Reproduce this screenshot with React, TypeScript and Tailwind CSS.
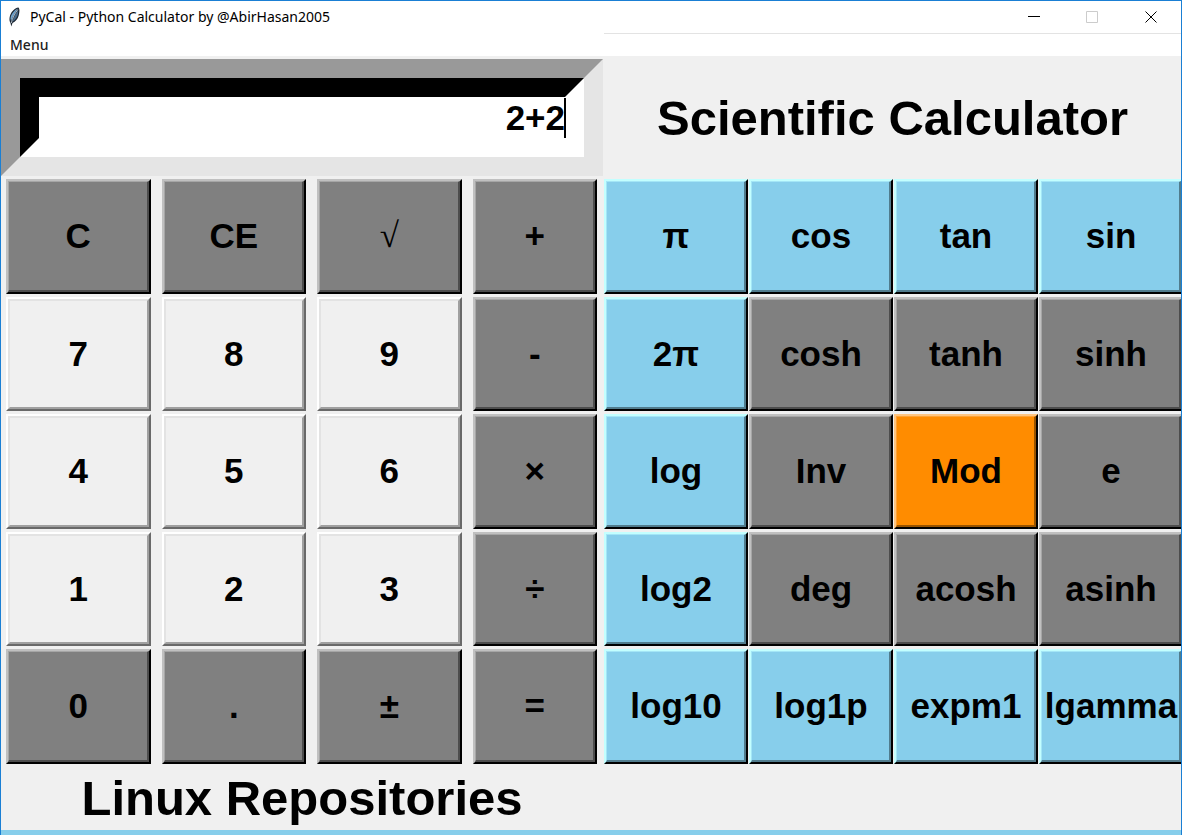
import { useState } from "react";

type Tone = "gray" | "light" | "sky" | "orange";
type Key = { label: string; tone: Tone };

const OUTER: Record<Tone, string> = {
  gray: "border-t-[#c0c0c0] border-l-[#c0c0c0] border-r-black border-b-black bg-[#808080]",
  light: "border-t-white border-l-white border-r-[#696969] border-b-[#696969] bg-[#f0f0f0]",
  sky: "border-t-[#c3ffff] border-l-[#c3ffff] border-r-black border-b-black bg-[#87ceeb]",
  orange: "border-t-[#ffc580] border-l-[#ffc580] border-r-black border-b-black bg-[#ff8c00]",
};

const INNER: Record<Tone, string> = {
  gray: "border-t border-l pt-px pl-px border-t-[#a6a6a6] border-l-[#a6a6a6] border-r-[#4d4d4d] border-b-[#4d4d4d]",
  light: "border-t-2 border-l-2 border-t-[#e3e3e3] border-l-[#e3e3e3] border-r-[#a0a0a0] border-b-[#a0a0a0]",
  sky: "border-t border-l pt-px pl-px border-t-[#a4e6f6] border-l-[#a4e6f6] border-r-[#517c8d] border-b-[#517c8d]",
  orange: "border-t border-l pt-px pl-px border-t-[#ffa335] border-l-[#ffa335] border-r-[#995400] border-b-[#995400]",
};

const row = (labels: string[], tones: Tone[]): Key[] =>
  labels.map((label, i) => ({ label, tone: tones[i] }));

const BASIC: Key[] = [
  ...row(["C", "CE", "√", "+"], ["gray", "gray", "gray", "gray"]),
  ...row(["7", "8", "9", "-"], ["light", "light", "light", "gray"]),
  ...row(["4", "5", "6", "×"], ["light", "light", "light", "gray"]),
  ...row(["1", "2", "3", "÷"], ["light", "light", "light", "gray"]),
  ...row(["0", ".", "±", "="], ["gray", "gray", "gray", "gray"]),
];

const SCIENTIFIC: Key[] = [
  ...row(["π", "cos", "tan", "sin"], ["sky", "sky", "sky", "sky"]),
  ...row(["2π", "cosh", "tanh", "sinh"], ["sky", "gray", "gray", "gray"]),
  ...row(["log", "Inv", "Mod", "e"], ["sky", "gray", "orange", "gray"]),
  ...row(["log2", "deg", "acosh", "asinh"], ["sky", "gray", "gray", "gray"]),
  ...row(["log10", "log1p", "expm1", "lgamma"], ["sky", "sky", "sky", "sky"]),
];

function KeyButton({ label, tone }: Key) {
  return (
    <button type="button" className={`flex min-w-0 border-2 ${OUTER[tone]}`}>
      <span
        className={`flex min-w-0 flex-1 items-center justify-center self-stretch border-r-2 border-b-2 ${INNER[tone]}`}
      >
        {label === "√" ? (
          <span className="font-['Liberation_Serif',serif] font-normal">{label}</span>
        ) : (
          label
        )}
      </span>
    </button>
  );
}

function Feather() {
  return (
    <svg width="14" height="20" viewBox="0 0 14 20" aria-hidden="true">
      <path d="M10.500 .5C6.500 1 2.500 5 1.600 10.500 1.300 12.800 1.500 14.500 2.500 16L3.300 19.500 4.500 16C7.500 14.500 9.800 12 10.700 8.500 11.500 5 12 2 10.500 .5Z" fill="#1c2632" />
      <path d="M9.800 1.500C6.500 3 3 7 2.500 11.500L3 14C4.500 10 7 5.500 9.800 1.500Z" fill="#6fa3cd" />
      <path d="M10.200 3C7.500 7 5.500 11 4.300 14.800 7.500 13 9.300 10 10 6.500Z" fill="#46698a" />
      <path d="M9.800 2.500C6.500 7 4.500 11 3.300 16" stroke="#d5e0e8" strokeWidth=".8" fill="none" />
    </svg>
  );
}

export default function App() {
  const [value, setValue] = useState("2+2");

  return (
    <div className="flex min-h-screen flex-col border-x border-t border-[#1a7fd4] bg-[#f0f0f0] font-['Liberation_Sans',Arial,sans-serif] text-black">
      <header className="flex h-8 items-center bg-white pl-[7px]">
        <Feather />
        <h1 className="ml-2 flex-1 font-['Noto_Sans',sans-serif] text-sm">
          PyCal - Python Calculator by @AbirHasan2005
        </h1>
        <button type="button" aria-label="Minimize" className="flex h-8 w-[58px] items-center justify-center">
          <svg width="12" height="12" viewBox="0 0 12 12"><path d="M0 5.500H12" stroke="#000" /></svg>
        </button>
        <button type="button" aria-label="Maximize" disabled className="flex h-8 w-[58px] items-center justify-center">
          <svg width="12" height="12" viewBox="0 0 12 12"><path d="M.5 .5H11.500V11.500H.5Z" fill="none" stroke="#ccc" /></svg>
        </button>
        <button type="button" aria-label="Close" className="flex h-8 w-[60px] items-center justify-center">
          <svg width="12" height="12" viewBox="0 0 12 12"><path d="M.5 .5L11.500 11.500M11.500 .5L.5 11.500" stroke="#000" /></svg>
        </button>
      </header>
      <nav className="grid h-[23px] grid-cols-[603fr_577fr] bg-white">
        <div className="flex items-center pl-[9px]">
          <button type="button" className="font-['Noto_Sans',sans-serif] text-sm font-medium text-[#222]">
            Menu
          </button>
        </div>
        <div className="border-t border-[#e3e3e3]" />
      </nav>

      <main className="grid flex-1 grid-cols-[602fr_578fr] overflow-hidden pt-[3px]">
        <section className="flex min-w-0 flex-col">
          <div className="relative mb-[3px] border-[19px] border-t-[#999] border-l-[#999] border-r-[#e5e5e5] border-b-[#e5e5e5]">
            <input
              aria-label="Expression"
              value={value}
              onChange={(e) => setValue(e.target.value)}
              className="block h-[79px] w-full border-[19px] border-t-black border-l-black border-r-white border-b-white bg-white text-right text-[35px] font-bold outline-none"
            />
            <span className="absolute top-5 right-[18px] h-10 w-[2px] bg-black" />
          </div>
          <div className="grid flex-1 auto-rows-fr grid-cols-[289fr_289fr_289fr_249fr] gap-x-[11px] gap-y-[3px] pr-[6px] pl-[5px] text-[35px] font-bold">
            {BASIC.map((k) => (
              <KeyButton key={k.label} {...k} />
            ))}
          </div>
        </section>

        <section className="flex min-w-0 flex-col">
          <h2 className="mb-[3px] flex h-[117px] items-center justify-center pt-[2px] pl-px text-[49px] font-bold">
            Scientific Calculator
          </h2>
          <div className="-mr-[2px] grid flex-1 auto-rows-fr grid-cols-4 gap-x-px gap-y-[3px] pl-px text-[35px] font-bold">
            {SCIENTIFIC.map((k) => (
              <KeyButton key={k.label} {...k} />
            ))}
          </div>
        </section>
      </main>

      <footer className="grid h-[71px] grid-cols-[602fr_578fr] border-b-[5px] border-[#87ceeb]">
        <h2 className="flex items-center justify-center pt-[2px] text-[49px] leading-none font-bold">
          Linux Repositories
        </h2>
      </footer>
    </div>
  );
}
